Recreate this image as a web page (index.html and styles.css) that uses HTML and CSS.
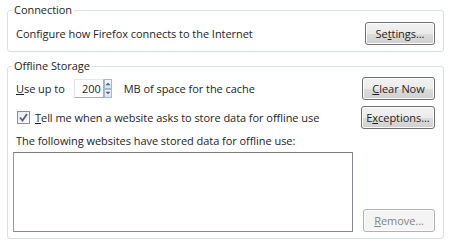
FILE: index.html
```html
<!DOCTYPE html>
<html lang="en">
<head>
    <meta charset="UTF-8">
    <title>Network options</title>
    <link rel="stylesheet" href="styles.css">
</head>
<body>

    <fieldset class="group">
        <legend>Connection</legend>
        <div class="row">
            <span class="label-text">Configure how Firefox connects to the Internet</span>
            <button class="win-button settings-button">Se<u>t</u>tings...</button>
        </div>
    </fieldset>

    <fieldset class="group storage">
        <legend>Offline Storage</legend>
        <div class="storage-grid">
            <div class="line">
                <span><u>U</u>se up to</span>
                <span class="spinner">
                    <span class="spin-value">200</span>
                    <span class="spin-arrows">
                        <span class="spin-btn">
                            <svg width="7" height="4" viewBox="0 0 7 4"><path d="M0.5 3.5 L3.5 0.5 L6.5 3.5 Z" fill="#4a5f80"/></svg>
                        </span>
                        <span class="spin-btn">
                            <svg width="7" height="4" viewBox="0 0 7 4"><path d="M0.5 0.5 L3.5 3.5 L6.5 0.5 Z" fill="#4a5f80"/></svg>
                        </span>
                    </span>
                </span>
                <span>MB of space for the cache</span>
            </div>
            <button class="win-button clear-button"><u>C</u>lear Now</button>

            <div class="line">
                <span class="checkbox">
                    <svg width="9" height="9" viewBox="0 0 9 9"><path d="M1 4.5 L3.5 7.5 L8 1" fill="none" stroke="#4d6185" stroke-width="1.8"/></svg>
                </span>
                <span><u>T</u>ell me when a website asks to store data for offline use</span>
            </div>
            <button class="win-button">E<u>x</u>ceptions...</button>

            <div class="line list-label">The following websites have stored data for offline use:</div>

            <div class="site-list"></div>
            <button class="win-button remove-button" disabled><u>R</u>emove...</button>
        </div>
    </fieldset>

</body>
</html>
```

FILE: styles.css
```css
/* Basic Reset */
* {
    margin: 0;
    padding: 0;
    box-sizing: border-box;
}

body {
    font-family: 'Open Sans', 'Noto Sans', sans-serif;
    font-size: 11px;
    letter-spacing: -0.05px;
    color: #1e1e1e;
    background-color: #ffffff;
    width: 450px;
    height: 246px;
    padding: 2px 6px 0 7px;
}

.group {
    border: 1px solid #d5dfe5;
    border-radius: 3px;
    box-shadow: inset 1px 1px 0 #ffffff;
    padding: 4px 8px 6px 5px;
    min-width: 0;
}

.group legend {
    padding: 0 2px;
    margin-left: -1px;
    line-height: 16px;
}

.row {
    display: flex;
    justify-content: space-between;
    align-items: center;
    height: 23px;
    padding-left: 3px;
}

.storage {
    margin-top: 6px;
    padding-top: 3px;
    padding-bottom: 6px;
}

.storage-grid {
    display: grid;
    grid-template-columns: 1fr 74px;
    column-gap: 8px;
    row-gap: 6px;
    align-items: center;
}

.line {
    display: flex;
    align-items: center;
    padding-left: 3px;
}

.list-label {
    grid-column: 1 / 3;
    height: 16px;
    margin: -3px 0 -2px;
}

/* Buttons */
.win-button {
    font-family: inherit;
    font-size: inherit;
    letter-spacing: inherit;
    color: #1e1e1e;
    height: 23px;
    width: 74px;
    padding: 0 4px;
    justify-self: end;
    border: 1px solid #707070;
    border-radius: 3px;
    box-shadow: inset 0 0 0 1px #fcfcfc;
    background: linear-gradient(#f2f2f2 0%, #ebebeb 50%, #dddddd 51%, #cfcfcf 100%);
}

.settings-button {
    width: 70px;
}

.clear-button {
    width: 73px;
}

.remove-button {
    align-self: end;
    width: 72px;
    color: #838383;
    border-color: #adb2b5;
    background: #f4f4f4;
}

/* Spinner */
.spinner {
    display: flex;
    height: 19px;
    margin: 0 12px 0 9px;
}

.spin-value {
    width: 30px;
    border: 1px solid #abadb3;
    border-top-color: #e3e9ef;
    border-left-color: #e2e3ea;
    text-align: right;
    padding-right: 2px;
    line-height: 17px;
}

.spin-arrows {
    display: flex;
    flex-direction: column;
    width: 8px;
}

.spin-btn {
    flex: 1;
    display: flex;
    align-items: center;
    justify-content: center;
    border: 1px solid #a6b8cf;
    background: linear-gradient(#f4f8fc, #dae4f0);
}

/* Checkbox */
.checkbox {
    width: 13px;
    height: 13px;
    margin: 0 5px 0 1px;
    border: 1px solid #8e8f8f;
    background: linear-gradient(135deg, #e8e9eb, #fdfdfd);
    display: flex;
    align-items: center;
    justify-content: center;
}

.site-list {
    height: 80px;
    border: 1px solid #828790;
    border-top-color: #7a7a7a;
    border-left-color: #9a9a9a;
    background-color: #ffffff;
}
```
